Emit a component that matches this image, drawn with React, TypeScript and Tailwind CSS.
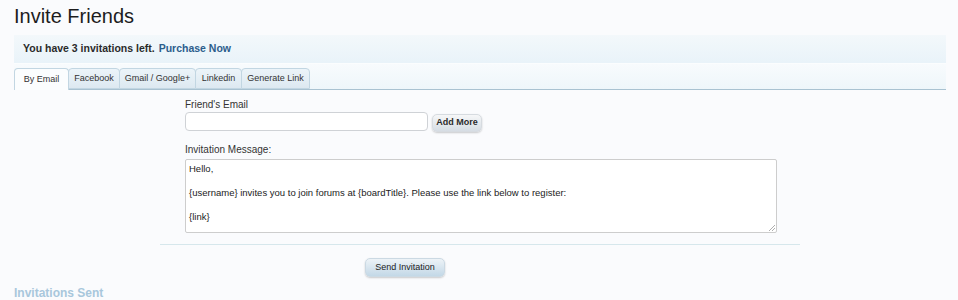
import React from "react";

const tabs = ["By Email", "Facebook", "Gmail / Google+", "Linkedin", "Generate Link"];
const tabWidths = ["w-[55px]", "w-[52px]", "w-[77px]", "w-[47px]", "w-[69px]"];

export default function App() {
  return (
    <div
      className="w-[958px] h-[300px] overflow-hidden bg-[#fafbfd] text-[#222]"
      style={{ fontFamily: '"Liberation Sans", Arial, sans-serif' }}
    >
      <div className="h-[35px] pl-[14px] pt-[4px]">
        <h1 className="text-[20px] leading-[24px] text-[#1d1d1d]">Invite Friends</h1>
      </div>
      <div className="mx-[14px] w-[932px]">
        <div className="h-[29px] flex items-center pl-[9px] bg-gradient-to-b from-[#f3f8fb] to-[#e9f3f9] border-b border-[#fbfdfe] text-[10.5px] font-bold text-[#2a2a2a]">
          <span>You have 3 invitations left.</span>
          <span className="ml-[4px] text-[#2c5d8c]">Purchase Now</span>
        </div>
        <div className="h-[26px] flex items-end bg-gradient-to-b from-[#f8fbfd] to-[#eef6fa] border-b border-[#a9c2d1]">
          {tabs.map((t, i) => (
            <div
              key={t}
              className={
                (i === 0
                  ? "bg-[#fbfdfe] h-[22px] -mb-px border-b-0 "
                  : "bg-gradient-to-b from-[#ecf4f9] to-[#dde9f1] h-[21px] ") +
                tabWidths[i] +
                " flex items-center justify-center border border-[#c2d6e2] rounded-t-[4px] text-[9px] text-[#333] -mr-px"
              }
            >
              {t}
            </div>
          ))}
        </div>
      </div>
      <div className="pl-[185px] pt-[9px]">
        <div className="text-[10px] leading-[12px] text-[#333] h-[13px]">Friend's Email</div>
        <div className="flex items-start gap-[4px]">
          <div className="w-[243px] h-[19px] bg-white border border-[#cfd2d6] rounded-[4px]" />
          <div className="mt-[2px] w-[50px] h-[18px] flex items-center justify-center rounded-[5px] bg-gradient-to-b from-[#f6f7f8] to-[#d6dde4] border border-[#d6dbe0] shadow-[0_1px_2px_rgba(0,0,0,0.2)] text-[9px] font-bold text-[#2b2b2b]">
            Add More
          </div>
        </div>
        <div className="mt-[12px] text-[10px] leading-[12px] text-[#333] h-[15px]">Invitation Message:</div>
        <div className="relative w-[592px] h-[74px] bg-white border border-[#cdcdcd] rounded-[2px] pl-[3px] pt-[3px] text-[9.5px] leading-[12px] text-[#222]">
          <div>Hello,</div>
          <div>&nbsp;</div>
          <div>{"{username} invites you to join forums at {boardTitle}. Please use the link below to register:"}</div>
          <div>&nbsp;</div>
          <div>{"{link}"}</div>
          <svg className="absolute right-[1px] bottom-[1px]" width="7" height="7" viewBox="0 0 7 7">
            <line x1="1" y1="7" x2="7" y2="1" stroke="#999" strokeWidth="0.8" />
            <line x1="4" y1="7" x2="7" y2="4" stroke="#999" strokeWidth="0.8" />
          </svg>
        </div>
      </div>
      <div className="ml-[160px] mt-[11px] w-[640px] h-px bg-[#d6e7ec]" />
      <div className="pl-[365px] pt-[13px]">
        <div className="w-[80px] h-[19px] flex items-center justify-center rounded-[5px] bg-gradient-to-b from-[#edf3f7] to-[#c3d8e7] border border-[#cbd9e3] shadow-[0_1px_2px_rgba(0,0,0,0.2)] text-[9px] text-[#222]">
          Send Invitation
        </div>
      </div>
      <div className="pl-[14px] pt-[9px] text-[12px] font-bold text-[#a8c7dc] leading-[14px]">Invitations Sent</div>
    </div>
  );
}
